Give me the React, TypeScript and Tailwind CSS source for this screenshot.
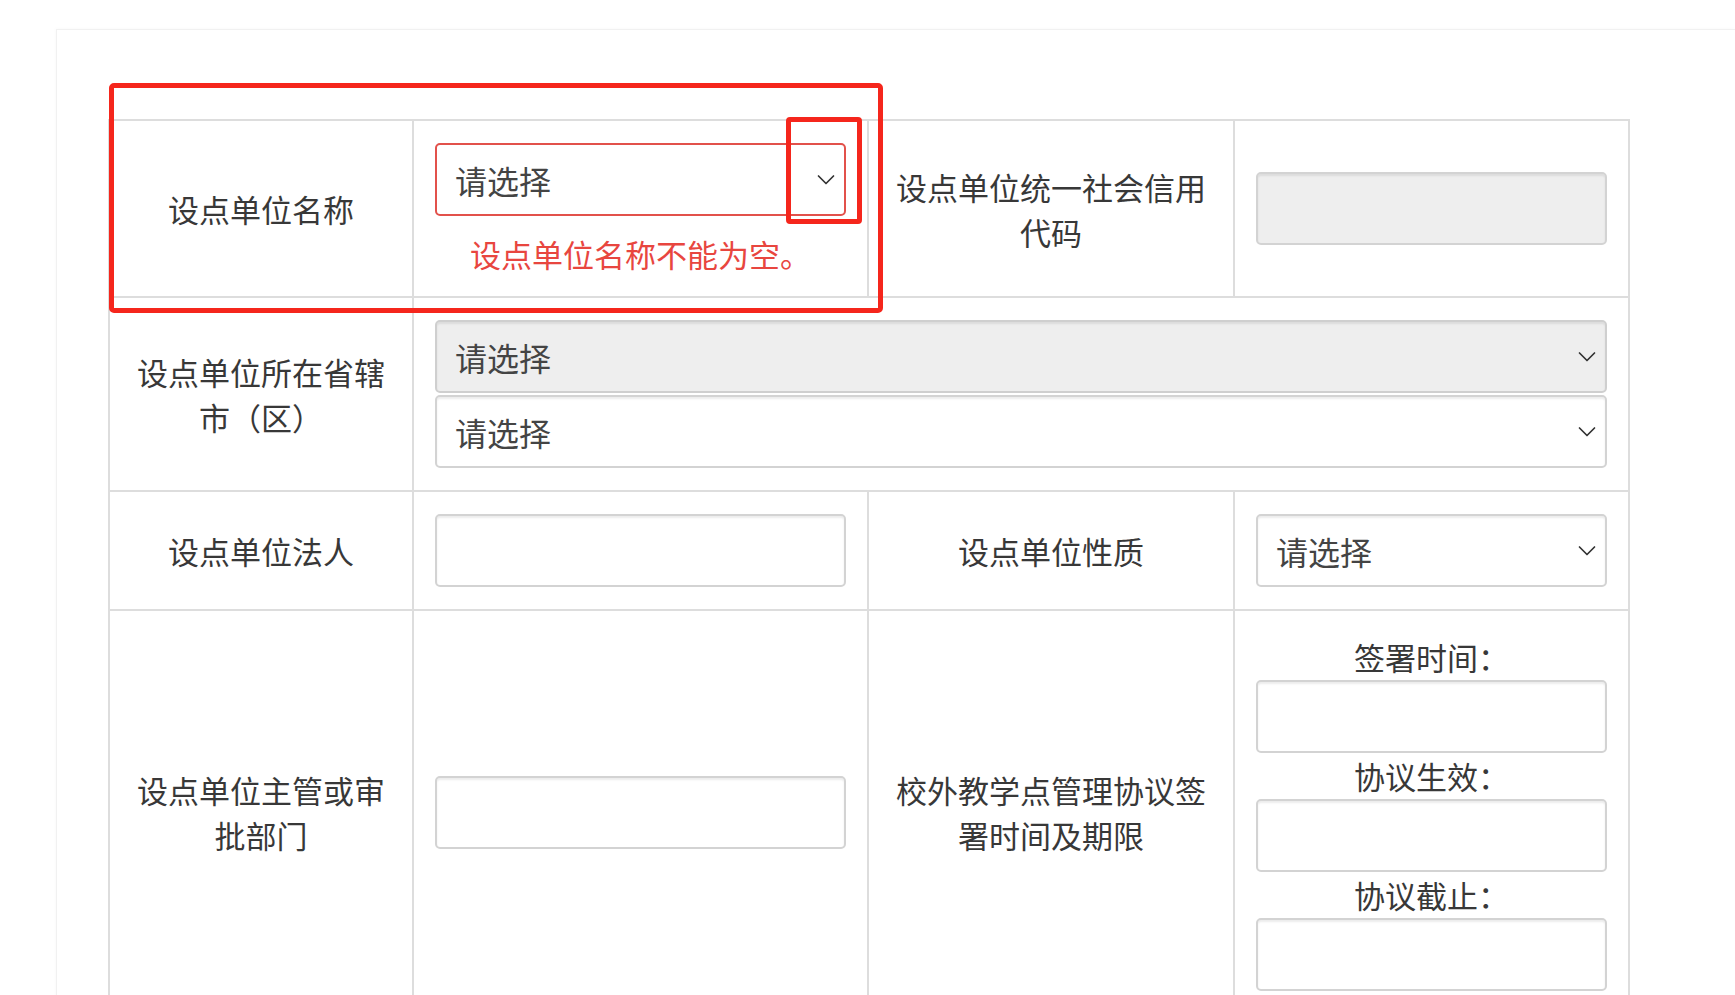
import React from "react";

const font = "font-['Noto_Sans_CJK_SC','Noto_Sans',sans-serif]";

function Chevron() {
  return (
    <svg
      className="pointer-events-none absolute right-[11px] top-1/2 -translate-y-1/2"
      width="18"
      height="11"
      viewBox="0 0 18 11"
      fill="none"
    >
      <polyline points="1.5,1.5 9,9 16.5,1.5" stroke="#333" strokeWidth="1.7" strokeLinecap="round" strokeLinejoin="round" />
    </svg>
  );
}

function Select({ error = false, disabled = false }: { error?: boolean; disabled?: boolean }) {
  return (
    <div className="relative w-full">
      <select
        defaultValue=""
        className={
          "block h-[73px] w-full appearance-none rounded-[5px] border-2 pl-[18px] pr-[44px] text-[32px] text-[#444] outline-none " +
          font +
          " " +
          (error
            ? "border-[#e2514b] bg-white"
            : disabled
            ? "border-[#cfcfcf] bg-[#eeeeee] shadow-[inset_0_2px_2px_rgba(0,0,0,0.08)]"
            : "border-[#d3d3d3] bg-white shadow-[inset_0_2px_2px_rgba(0,0,0,0.08)]")
        }
      >
        <option value="">请选择</option>
      </select>
      <Chevron />
    </div>
  );
}

function Input({ disabled = false }: { disabled?: boolean }) {
  return (
    <input
      type="text"
      disabled={disabled}
      className={
        "block h-[73px] w-full rounded-[5px] border-2 border-[#d3d3d3] px-[18px] text-[32px] text-[#444] outline-none shadow-[inset_0_2px_2px_rgba(0,0,0,0.08)] " +
        font +
        " " +
        (disabled ? "bg-[#eeeeee]" : "bg-white")
      }
    />
  );
}

const td = "border-2 border-[#dddddd] px-[21px] py-[22px] align-middle";
const labelTd = td + " text-center text-[31px] leading-[45px] text-[#383838]";
const subLabel = "text-center text-[31px] text-[#383838]";

export default function App() {
  return (
    <div className={"relative min-h-screen w-full overflow-hidden bg-white pl-[56px] pt-[29px] " + font}>
      <div className="border-l border-t border-[#f1f1f1] pl-[51px] pt-[89px] shadow-[-1px_-1px_3px_rgba(0,0,0,0.02)]">
        <table className="w-[1520px] table-fixed border-collapse">
          <colgroup>
            <col className="w-[304px]" />
            <col className="w-[455px]" />
            <col className="w-[366px]" />
            <col className="w-[395px]" />
          </colgroup>
          <tbody>
            <tr>
              <td className={labelTd}>设点单位名称</td>
              <td className={td}>
                <Select error />
                <div className="mt-[18px] text-center text-[31px] leading-[40px] text-[#e8463f]">
                  设点单位名称不能为空。
                </div>
              </td>
              <td className={labelTd}>设点单位统一社会信用代码</td>
              <td className={td}>
                <Input disabled />
              </td>
            </tr>
            <tr>
              <td className={labelTd}>设点单位所在省辖市（区）</td>
              <td className={td} colSpan={3}>
                <Select disabled />
                <div className="mt-[2px]">
                  <Select />
                </div>
              </td>
            </tr>
            <tr>
              <td className={labelTd}>设点单位法人</td>
              <td className={td}>
                <Input />
              </td>
              <td className={labelTd}>设点单位性质</td>
              <td className={td}>
                <Select />
              </td>
            </tr>
            <tr>
              <td className={labelTd}>设点单位主管或审批部门</td>
              <td className={td}>
                <Input />
              </td>
              <td className={labelTd}>校外教学点管理协议签署时间及期限</td>
              <td className={td}>
                <div className="flex flex-col">
                  <div className={"leading-[47px] " + subLabel}>签署时间：</div>
                  <Input />
                  <div className={"leading-[46px] " + subLabel}>协议生效：</div>
                  <Input />
                  <div className={"leading-[46px] " + subLabel}>协议截止：</div>
                  <Input />
                </div>
              </td>
            </tr>
          </tbody>
        </table>
      </div>

      <div className="pointer-events-none absolute left-[109px] top-[83px] h-[230px] w-[774px] rounded-[5px] border-[5px] border-[#f5261c]" />
      <div className="pointer-events-none absolute left-[786px] top-[117px] h-[107px] w-[76px] rounded-[4px] border-[5px] border-[#f5261c]" />
    </div>
  );
}
